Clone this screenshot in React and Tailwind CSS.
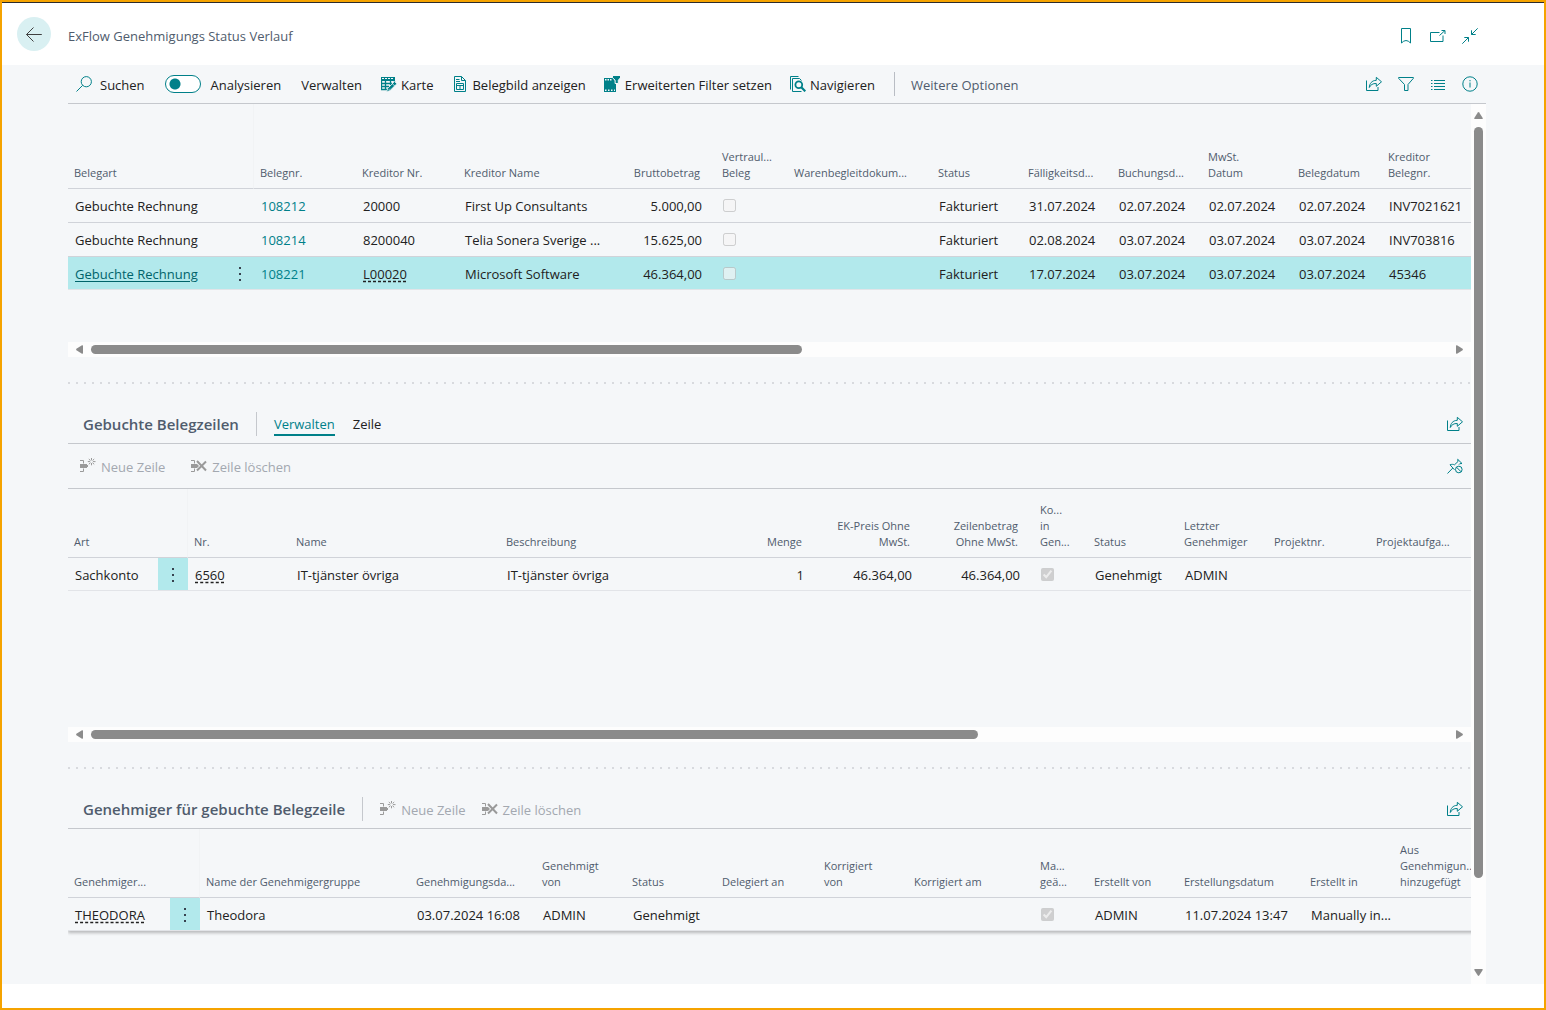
import clsx from "clsx";

const documentColumns = [
  { label: "Belegart", width: 158 },
  { label: "", width: 28, menu: true },
  { label: "Belegnr.", width: 102 },
  { label: "Kreditor Nr.", width: 102 },
  { label: "Kreditor Name", width: 156 },
  { label: "Bruttobetrag", width: 102, right: true },
  { label: "Vertraul...\nBeleg", width: 72 },
  { label: "Warenbegleitdokum...", width: 144 },
  { label: "Status", width: 90 },
  { label: "Fälligkeitsd...", width: 90 },
  { label: "Buchungsd...", width: 90 },
  { label: "MwSt.\nDatum", width: 90 },
  { label: "Belegdatum", width: 90 },
  { label: "Kreditor\nBelegnr.", width: 102 },
];

const documents = [
  ["Gebuchte Rechnung", null, { link: "108212" }, "20000", "First Up Consultants", "5.000,00", { checked: false }, "", "Fakturiert", "31.07.2024", "02.07.2024", "02.07.2024", "02.07.2024", "INV7021621"],
  ["Gebuchte Rechnung", null, { link: "108214" }, "8200040", "Telia Sonera Sverige ...", "15.625,00", { checked: false }, "", "Fakturiert", "02.08.2024", "03.07.2024", "03.07.2024", "03.07.2024", "INV703816"],
  [{ underlined: "Gebuchte Rechnung" }, { menu: true }, { link: "108221" }, { lookup: "L00020" }, "Microsoft Software", "46.364,00", { checked: false }, "", "Fakturiert", "17.07.2024", "03.07.2024", "03.07.2024", "03.07.2024", "45346"],
];

const lineColumns = [
  { label: "Art", width: 90 },
  { label: "", width: 30, menu: true },
  { label: "Nr.", width: 102 },
  { label: "Name", width: 210 },
  { label: "Beschreibung", width: 210 },
  { label: "Menge", width: 108, right: true },
  { label: "EK-Preis Ohne\nMwSt.", width: 108, right: true },
  { label: "Zeilenbetrag\nOhne MwSt.", width: 108, right: true },
  { label: "Ko...\nin\nGen...", width: 54 },
  { label: "Status", width: 90 },
  { label: "Letzter\nGenehmiger", width: 90 },
  { label: "Projektnr.", width: 102 },
  { label: "Projektaufga...", width: 114 },
];

const lines = [
  ["Sachkonto", { menu: true }, { lookup: "6560" }, "IT-tjänster övriga", "IT-tjänster övriga", "1", "46.364,00", "46.364,00", { checked: true }, "Genehmigt", "ADMIN", "", ""],
];

const approverColumns = [
  { label: "Genehmiger...", width: 102 },
  { label: "", width: 30, menu: true },
  { label: "Name der Genehmigergruppe", width: 210 },
  { label: "Genehmigungsda...", width: 126 },
  { label: "Genehmigt\nvon", width: 90 },
  { label: "Status", width: 90 },
  { label: "Delegiert an", width: 102 },
  { label: "Korrigiert\nvon", width: 90 },
  { label: "Korrigiert am", width: 126 },
  { label: "Ma...\ngeä...", width: 54 },
  { label: "Erstellt von", width: 90 },
  { label: "Erstellungsdatum", width: 126 },
  { label: "Erstellt in", width: 90 },
  { label: "Aus\nGenehmigun...\nhinzugefügt", width: 90 },
];

const approvers = [
  [{ lookup: "THEODORA" }, { menu: true }, "Theodora", "03.07.2024 16:08", "ADMIN", "Genehmigt", "", "", "", { checked: true }, "ADMIN", "11.07.2024 13:47", "Manually in...", ""],
];

function Icon({ className, children }) {
  return (
    <svg
      viewBox="0 0 16 16"
      fill="none"
      stroke="currentColor"
      className={clsx("size-4 shrink-0", className)}
      aria-hidden="true"
    >
      {children}
    </svg>
  );
}

const SearchIcon = () => (
  <Icon>
    <circle cx="10.3" cy="5.7" r="5.1" />
    <path d="M6.7 9.3 0.5 15.5" />
  </Icon>
);

const CardIcon = () => (
  <Icon>
    <path fill="currentColor" stroke="none" fillRule="evenodd" d="M0 1h14v4H0V1Zm1 1v1h2V2H1Zm3 0v1h2V2H4Zm3 0v1h2V2H7Zm3 0v1h2V2h-2Z" />
    <path d="M.5 5v8.500M4.500 5v8.500M9.500 5v4M13.500 5v2M0 7.500h11M0 10.500h8M0 13.500h6" strokeWidth="1.300" />
    <path
      d="M13.500 5.500 15.800 7.800 9 14.500l-3.300 1.200.9-3.200 6.900-7Z"
      fill="currentColor"
      stroke="#f5f7f9"
      strokeWidth=".7"
    />
    <path d="m11.300 7.600 2.300 2.300M7.800 13.800l1-1" stroke="#f5f7f9" strokeWidth=".8" />
  </Icon>
);

const DocumentIcon = () => (
  <Icon>
    <path d="M2.500.5h7l4 4v11h-11V.5Z" />
    <path d="M9.500.5v4h4M4 3.500h3.500M4 5.500h4M4.500 7.500h7v6h-7v-6ZM4.500 9.500h7M8 9.500v4" />
  </Icon>
);

const FilterSheetIcon = () => (
  <Icon>
    <path
      fill="currentColor"
      stroke="none"
      fillRule="evenodd"
      d="M0 2h9l2 3v2h1v9H0V2Zm1 1v1.500h1.500V3H1Zm2.500 0v1.500H5V3H3.500ZM6 3v1.500h1.500V3H6ZM1 13.500V15h1.500v-1.500H1Zm3 0V15h1.500v-1.500H4Zm3 0V15h1.500v-1.500H7Zm3 0V15h1v-1.500h-1Z"
    />
    <path
      d="M8.500-.5h8v2.300L14.300 4.200v3.300h-3.200V4.200L8.500 1.800v-2.300Z"
      fill="currentColor"
      stroke="#f5f7f9"
    />
  </Icon>
);

const NavigateIcon = () => (
  <Icon>
    <path d="M.5 13.500V.5h8M2.500 15.500v-13h7l2 2M2.500 15.500h9" />
    <circle cx="8.800" cy="8.800" r="3.400" strokeWidth="1.800" />
    <path d="m11.300 11.300 4 4" strokeWidth="2.200" />
  </Icon>
);

const ShareIcon = () => (
  <Icon>
    <path d="M.5 4.500v10h11.500v-3.500" />
    <path d="M3.300 11.500c.3-4 2.400-7 7-7.200V1.300l5.200 4.500-5.200 4.500V7.500c-3.600-.2-5.600 1.300-7 4Z" strokeLinejoin="round" />
  </Icon>
);

const FunnelIcon = () => (
  <Icon>
    <path d="M.6 1.500h14.800v.8L10 8.500v6H6.500v-6L.6 2.300v-.8Z" />
  </Icon>
);

const ListIcon = () => (
  <Icon>
    <path d="M1 4.500h1.500M4 4.500h11M1 7.500h1.500M4 7.500h11M1 10.500h1.500M4 10.500h11M1 13.500h1.500M4 13.500h11" />
  </Icon>
);

const InfoIcon = () => (
  <Icon>
    <circle cx="8" cy="8" r="7.200" />
    <path d="M8 6.500v5M8 4v1.300" />
  </Icon>
);

const BookmarkIcon = () => (
  <Icon>
    <path d="M3.500.5h9v14.500l-2.200-1.800-2.300-.7-2.300.7L3.500 15V.5Z" />
  </Icon>
);

const PopOutIcon = () => (
  <Icon>
    <path d="M9.500 4.500h-9v9h12.500V7.500M9.500 7.500l5.500-5M11.500 2.500H15V6" />
  </Icon>
);

const CollapseIcon = () => (
  <Icon>
    <path d="M15.700.3 9.500 6.500M9.500 2.300v4.200h4.200M.3 15.700l6.200-6.200M6.500 13.700V9.500H2.300" />
  </Icon>
);

const UnpinIcon = () => (
  <Icon>
    <path d="M.5 15.500 5.800 10M3 6.800l4.500 5M3 6.800c1.800-.7 3.500-.5 4.500 0L11 3.500l-.3-2.200 4.300 4.200-2.200.2-.8.9" />
    <circle cx="11.800" cy="11.500" r="3.300" />
    <path d="m9.500 9.200 4.600 4.600" />
  </Icon>
);

const NewLineIcon = () => (
  <Icon>
    <path d="M0 2.500h3.500v3M0 13.500h3.500v-3" />
    <path fill="currentColor" stroke="none" d="M0 6h7v1h1v2H7v1H0V6Z" />
    <path d="M11.500 0v2.300M11.500 5v2.300M7.800 3.600h2.300M13 3.600h2.500M8.800 1l1.700 1.600M14.200 1l-1.700 1.600M8.800 6.300l1.700-1.600M14.200 6.300l-1.700-1.600" />
  </Icon>
);

const DeleteLineIcon = () => (
  <Icon>
    <path d="M0 2.500h3.500v3M0 13.500h3.500v-3" />
    <path fill="currentColor" stroke="none" d="M0 6h6l2 2-2 2H0V6Z" />
    <path d="m6 3 9 9.500M15 3.500l-9 9" strokeWidth="2" />
  </Icon>
);

function Command({ icon, children, muted, className }) {
  return (
    <button
      type="button"
      disabled={muted}
      className={clsx(
        "flex items-center whitespace-nowrap",
        muted && "text-[#a3a8b0]",
        className ?? "gap-1"
      )}
    >
      {icon && <span className={muted ? "text-[#9a9a9a]" : "text-[#008089]"}>{icon}</span>}
      <span className="pt-0.5">{children}</span>
    </button>
  );
}

function IconButton({ label, children }) {
  return (
    <button type="button" aria-label={label} className="text-[#008089]">
      {children}
    </button>
  );
}

function Cell({ value }) {
  if (value === null || typeof value === "string") return value;
  if (value.link) {
    return <a href="#" className="text-[#008089]">{value.link}</a>;
  }
  if (value.underlined) {
    return <a href="#" className="text-[#00646b] underline underline-offset-2">{value.underlined}</a>;
  }
  if (value.lookup) {
    return <span className="underline decoration-dashed underline-offset-2">{value.lookup}</span>;
  }
  if (value.menu) {
    return (
      <button type="button" aria-label="Weitere Optionen anzeigen" className="block w-full">
        <svg viewBox="0 0 2 14" className="mx-auto h-3.5 w-0.5 fill-[#36424f]" aria-hidden="true">
          <path d="M0 0h2v2H0zM0 6h2v2H0zM0 12h2v2H0z" />
        </svg>
      </button>
    );
  }
  return (
    <input
      type="checkbox"
      disabled
      checked={value.checked}
      readOnly
      aria-label="Ja/Nein"
      className="block size-[13px]"
    />
  );
}

function DataTable({ label, columns, rows, headerClass, selected, shadow }) {
  return (
    <table
      aria-label={label}
      className={clsx(
        "w-full min-w-[1416px] table-fixed border-separate border-spacing-0 text-left",
        shadow && "shadow-[0_2px_3px_rgba(0,0,0,0.25)]"
      )}
    >
      <colgroup>
        {columns.map((col, i) => (
          <col key={i} style={{ width: col.width }} />
        ))}
      </colgroup>
      <thead>
        <tr>
          {columns.map((col, i) => (
            <th
              key={i}
              className={clsx(
                "border-b border-b-[#d0d3d9] pb-[7px] pl-1.5 align-bottom text-[11px] leading-4 font-normal whitespace-pre text-[#505c6d]",
                headerClass,
                col.right && "pr-4 text-right",
                col.menu && "border-r border-r-[#f1f3f5]"
              )}
            >
              {col.label}
            </th>
          ))}
        </tr>
      </thead>
      <tbody>
        {rows.map((row, r) => (
          <tr key={r} className={clsx(selected === r && "bg-[#b2e9ec]")}>
            {row.map((value, i) => (
              <td
                key={i}
                className={clsx(
                  "border-b whitespace-nowrap",
                  r === rows.length - 1 ? "h-[33px] border-[#e2e4e8] pt-px" : "h-[34px] border-[#d0d3d9]",
                  columns[i].menu ? "px-0" : "pl-[7px]",
                  columns[i].right && "pr-3.5 text-right",
                  value?.menu && "bg-[#b2e9ec]"
                )}
              >
                <Cell value={value} />
              </td>
            ))}
          </tr>
        ))}
      </tbody>
    </table>
  );
}

function HorizontalScrollbar({ size }) {
  return (
    <div className="flex h-[15px] items-center gap-2 bg-[#fdfdfd] px-2" aria-hidden="true">
      <svg viewBox="0 0 7 9" className="h-[9px] w-[7px] fill-[#8b8b8b]">
        <path d="M6 0.300Q7 0 7 1v7q0 1-1 .7L.4 5.200Q-.2 4.500.4 3.800Z" />
      </svg>
      <div className="flex-1">
        <div className="h-[9px] rounded-full bg-[#8b8b8b]" style={{ width: `${size}%` }} />
      </div>
      <svg viewBox="0 0 7 9" className="h-[9px] w-[7px] fill-[#8b8b8b]">
        <path d="M1 0.300Q0 0 0 1v7q0 1 1 .7l5.600-3.500q.6-.7 0-1.400Z" />
      </svg>
    </div>
  );
}

function VerticalScrollbar({ size }) {
  return (
    <div className="flex w-[15px] shrink-0 flex-col items-center gap-2 bg-[#fdfdfd] py-2" aria-hidden="true">
      <svg viewBox="0 0 9 7" className="h-[7px] w-[9px] fill-[#8b8b8b]">
        <path d="M.3 6Q0 7 1 7h7q1 0 .7-1L5.200.4Q4.500-.2 3.800.4Z" />
      </svg>
      <div className="flex-1">
        <div className="w-[9px] rounded-full bg-[#8b8b8b]" style={{ height: `${size}%` }} />
      </div>
      <svg viewBox="0 0 9 7" className="h-[7px] w-[9px] fill-[#8b8b8b]">
        <path d="M.3 1Q0 0 1 0h7q1 0 .7 1L5.200 6.600q-.7.600-1.400 0Z" />
      </svg>
    </div>
  );
}

function Splitter() {
  return (
    <div className="pt-[25px]">
      <div className="h-0.5 bg-[repeating-linear-gradient(90deg,#d8dade_0_2px,transparent_2px_8px)]" />
    </div>
  );
}

function SectionHeader({ title, children }) {
  return (
    <div className="flex h-15 items-end justify-between border-b border-[#c5c8cd] pr-2 pb-[7px] pl-[15px]">
      <div className="flex h-6 items-center">
        <h2 className="text-[15px] leading-6 font-semibold text-[#505c6d]">{title}</h2>
        <div className="mx-[17px] h-6 w-px bg-[#c5c8cd]" />
        {children}
      </div>
      <div className="flex h-6 items-center">
        <IconButton label="Teilen"><ShareIcon /></IconButton>
      </div>
    </div>
  );
}

function LineCommands({ className }) {
  return (
    <div className={clsx("flex items-center", className)}>
      <Command muted icon={<NewLineIcon />} className="gap-[5px]">Neue Zeile</Command>
      <Command muted icon={<DeleteLineIcon />} className="gap-[5px]">Zeile löschen</Command>
    </div>
  );
}

function Toolbar() {
  return (
    <div className="flex h-[39px] items-center justify-between border-b border-[#c5c8cd] pr-2 pl-2">
      <div className="flex items-center gap-[19px]">
        <div className="flex items-center gap-5">
          <Command icon={<SearchIcon />} className="gap-2">Suchen</Command>
          <label className="flex items-center gap-2.5">
            <input
              type="checkbox"
              role="switch"
              className="h-[18px] w-9 appearance-none rounded-full border border-[#008089] bg-white bg-[radial-gradient(circle_at_9px_8px,#008089_5px,transparent_6px)]"
            />
            <span className="pt-0.5">Analysieren</span>
          </label>
          <Command>Verwalten</Command>
        </div>
        <Command icon={<CardIcon />}>Karte</Command>
        <div className="flex items-center gap-[18px]">
          <Command icon={<DocumentIcon />}>Belegbild anzeigen</Command>
          <Command icon={<FilterSheetIcon />} className="gap-[5px]">Erweiterten Filter setzen</Command>
          <Command icon={<NavigateIcon />}>Navigieren</Command>
        </div>
        <div className="flex items-center gap-4">
          <div className="h-6 w-px bg-[#b9bdc4]" />
          <Command className="text-[#505c6d]">Weitere Optionen</Command>
        </div>
      </div>
      <div className="flex items-center gap-4">
        <IconButton label="Teilen"><ShareIcon /></IconButton>
        <IconButton label="Filter"><FunnelIcon /></IconButton>
        <IconButton label="Liste"><ListIcon /></IconButton>
        <IconButton label="Info"><InfoIcon /></IconButton>
      </div>
    </div>
  );
}

export default function App() {
  return (
    <div className="flex min-h-screen flex-col border-2 border-[#f5a300] bg-white font-['Open_Sans','Noto_Sans',sans-serif] text-[13px] leading-5 text-[#212121]">
      <header className="flex h-[63px] items-center justify-between border-t border-[#2b2b2b] pr-[66px] pl-[15px]">
        <div className="flex items-center gap-[17px]">
          <button
            type="button"
            aria-label="Zurück"
            className="flex size-[34px] items-center justify-center rounded-full bg-[#d9f0f2] text-[#404040]"
          >
            <Icon>
              <path d="M.5 8.500h15.300M7.500 1.500l-7 7 7 7" />
            </Icon>
          </button>
          <h1 className="pt-1 text-[13px] text-[#505c6d]">ExFlow Genehmigungs Status Verlauf</h1>
        </div>
        <div className="flex items-center gap-4 pt-1">
          <IconButton label="Lesezeichen"><BookmarkIcon /></IconButton>
          <IconButton label="In neuem Fenster öffnen"><PopOutIcon /></IconButton>
          <IconButton label="Verkleinern"><CollapseIcon /></IconButton>
        </div>
      </header>

      <main className="flex flex-1 flex-col bg-[#f5f7f9] pr-[58px] pl-[66px]">
        <Toolbar />
        <div className="flex flex-1">
          <div className="min-w-0 flex-1">
            <section className="min-h-[238px] overflow-hidden">
              <DataTable
                label="Genehmigungs Status Verlauf"
                columns={documentColumns}
                rows={documents}
                headerClass="h-[85px]"
                selected={2}
              />
            </section>
            <HorizontalScrollbar size={52.4} />
            <Splitter />

            <SectionHeader title="Gebuchte Belegzeilen">
              <div className="flex gap-[18px]">
                <button type="button" className="h-6 border-b-2 border-[#008089] pt-0.5 text-[#008089]">
                  Verwalten
                </button>
                <button type="button" className="h-6 border-b-2 border-transparent pt-0.5">Zeile</button>
              </div>
            </SectionHeader>
            <div className="flex h-[45px] items-center justify-between border-b border-[#c5c8cd] pr-2 pl-3">
              <LineCommands className="gap-[26px]" />
              <IconButton label="Lösen"><UnpinIcon /></IconButton>
            </div>
            <section className="min-h-[238px] overflow-hidden">
              <DataTable
                label="Gebuchte Belegzeilen"
                columns={lineColumns}
                rows={lines}
                headerClass="h-[69px]"
              />
            </section>
            <HorizontalScrollbar size={65.4} />
            <Splitter />

            <SectionHeader title="Genehmiger für gebuchte Belegzeile">
              <LineCommands className="gap-4" />
            </SectionHeader>
            <section className="overflow-hidden pb-2">
              <DataTable
                label="Genehmiger für gebuchte Belegzeile"
                columns={approverColumns}
                rows={approvers}
                headerClass="h-[69px]"
                shadow
              />
            </section>
          </div>
          <VerticalScrollbar size={90} />
        </div>
      </main>
      <footer className="h-6" />
    </div>
  );
}
